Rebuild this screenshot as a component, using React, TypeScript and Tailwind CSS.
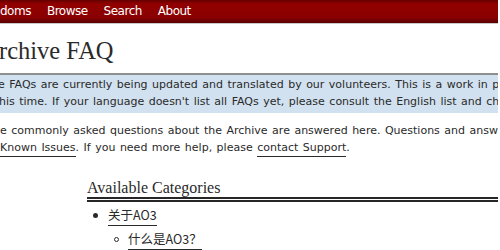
import React from "react";

const navItems = ["doms", "Browse", "Search", "About"];

export default function App() {
  return (
    <div className="w-[500px] h-[250px] overflow-hidden bg-white font-['DejaVu_Sans',sans-serif] text-[11px] text-[#2a2a2a]">
      <div className="w-[498px] h-[250px] overflow-hidden">
        {/* Header */}
        <header className="h-[24px] border-b border-[#c8c8c8] bg-[linear-gradient(to_bottom,#650000,#920000_18%,#8a0000_75%,#5a0000)]">
          <nav className="flex gap-[16px] h-[23px] leading-[23px] text-[12px] tracking-[-0.5px] text-white whitespace-nowrap">
            {navItems.map((item) => (
              <span key={item}>{item}</span>
            ))}
          </nav>
        </header>

        {/* Title */}
        <h1 className="mt-[15px] ml-[-1px] font-['Liberation_Serif',serif] text-[24.5px] leading-[24px] whitespace-nowrap">
          rchive FAQ
        </h1>

        {/* Notice */}
        <div className="mt-[10px] border-t-2 border-[#8f8f8f] bg-[#d1e1ef] pt-[1px] pb-[3px] leading-[17px] [word-spacing:1px] whitespace-nowrap overflow-hidden">
          <div className="ml-[-2px]">
            e FAQs are currently being updated and translated by our volunteers. This is a work in progress and not all
            information will be available
          </div>
          <div className="ml-[-1px]">
            his time. If your language doesn't list all FAQs yet, please consult the English list and check for any updates.
          </div>
        </div>

        {/* Intro */}
        <div className="mt-[9px] leading-[17px] [word-spacing:1px] whitespace-nowrap">
          <div>
            e commonly asked questions about the Archive are answered here. Questions and answers about our Terms of
            Service
          </div>
          <div>
            <a className="border-b border-[#2a2a2a] pb-[2px]">Known Issues</a>. If you need more help, please{" "}
            <a className="border-b border-[#2a2a2a] pb-[2px]">contact Support</a>.
          </div>
        </div>

        {/* Categories */}
        <section className="mt-[23px] ml-[87px]">
          <h2 className="font-['Liberation_Serif',serif] text-[16px] leading-[18px] border-b-[5px] border-double border-[#262626]">
            Available Categories
          </h2>
          <ul className="mt-[1px] ml-[6px] font-['Noto_Sans_CJK_SC',sans-serif] text-[12.5px]">
            <li className="flex items-center h-[24px]">
              <span className="w-[5px] h-[5px] rounded-full bg-[#2a2a2a]" />
              <a className="ml-[10px] leading-[24px]">
                <span className="border-b border-[#2a2a2a] pb-[1px]">关于AO3</span>
              </a>
            </li>
            <li className="flex items-center h-[24px] ml-[21px]">
              <span className="w-[5px] h-[5px] rounded-full border border-[#2a2a2a]" />
              <a className="ml-[9px] leading-[24px]">
                <span className="border-b border-[#2a2a2a] pb-[1px]">什么是AO3？</span>
              </a>
            </li>
          </ul>
        </section>
      </div>
    </div>
  );
}
